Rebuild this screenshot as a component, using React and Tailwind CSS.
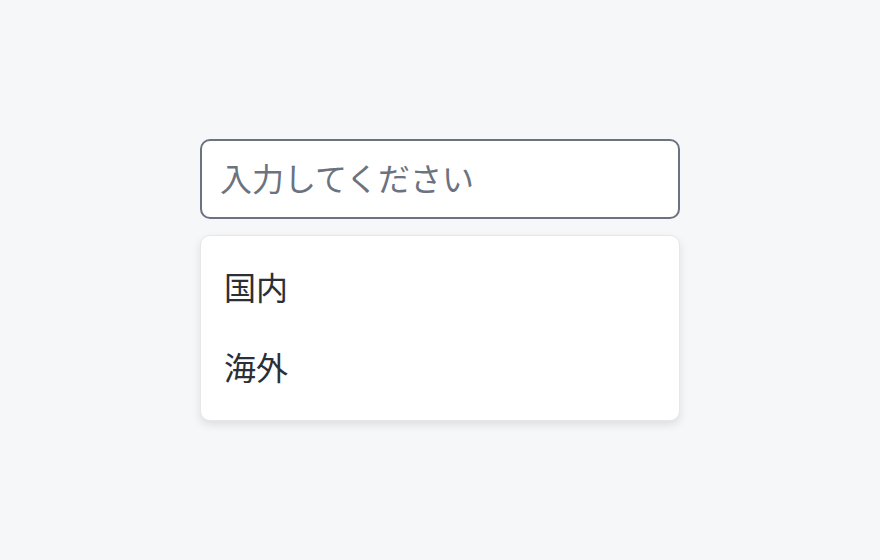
export default function App() {
  return (
    <div
      className="min-h-screen w-full bg-[#f6f7f9] flex items-center justify-center"
      style={{ fontFamily: '"Noto Sans CJK JP", "Noto Sans", sans-serif' }}
    >
      <div className="w-[480px] flex flex-col gap-4">
        <input
          type="text"
          placeholder="入力してください"
          className="h-20 w-full rounded-[10px] border-2 border-[#6b7280] bg-white pl-[18px] pr-4 pb-1 text-[32px] text-[#1f2937] placeholder:text-[#6b7280] outline-none"
        />
        <ul className="rounded-[10px] border border-[#e5e7eb] bg-white pt-[10px] pb-[14px] shadow-[0_4px_8px_rgba(0,0,0,0.1)]">
          <li className="h-20 flex items-center pl-[23px] pr-6 text-[32px] text-[#2b2f36]">国内</li>
          <li className="h-20 flex items-center pl-[23px] pr-6 text-[32px] text-[#2b2f36]">海外</li>
        </ul>
      </div>
    </div>
  );
}
